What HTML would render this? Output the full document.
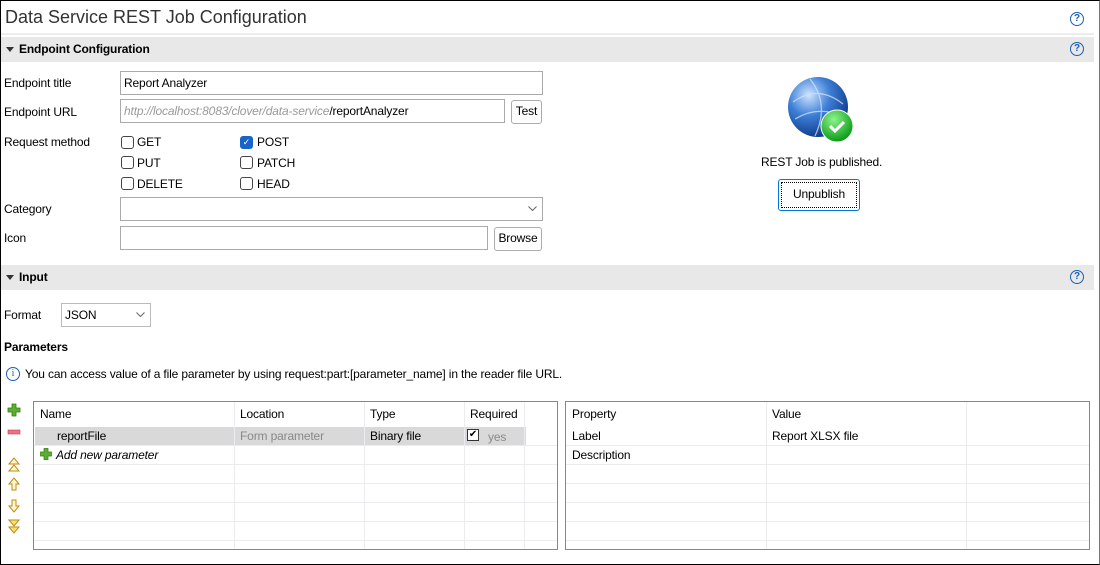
<!DOCTYPE html>
<html><head><meta charset="utf-8"><style>
*{box-sizing:border-box;margin:0;padding:0}
body{width:1100px;height:565px;overflow:hidden;background:#fff;font-family:"Liberation Sans",sans-serif;font-size:12px;letter-spacing:-0.15px;color:#000;position:relative}
.a{position:absolute;white-space:nowrap}
.frame{position:absolute;left:0;top:0;width:1100px;height:565px;border:1px solid #000;border-right-color:#777}
.band{position:absolute;left:1px;width:1093px;height:25px;background:#e8e8e8}
.band b{position:absolute;left:18px;top:5px;font-size:12px}
.tri{position:absolute;left:5px;top:10px;border-left:4px solid transparent;border-right:4px solid transparent;border-top:5px solid #333}
.help{position:absolute;width:14px;height:14px;border:1.5px solid #1a5fb4;border-radius:50%;color:#1a5fb4;font-size:10px;font-weight:bold;text-align:center;line-height:11px;letter-spacing:0}
.inp{position:absolute;border:1px solid #aaa;background:#fff;height:24px;padding:4px 3px}
.btn{position:absolute;border:1px solid #adadad;border-radius:3px;background:#fdfdfd;height:24px;text-align:center;line-height:21px}
.cb{position:absolute;width:13px;height:13px;border:1px solid #444;border-radius:3px;background:#fff}
.tbl{position:absolute;border:1px solid #828790;background:#fff;overflow:hidden}
.hl{position:absolute;height:1px;background:#ececf0}
.vl{position:absolute;width:1px;background:#ececf0}
.chev{position:absolute;right:5px;top:8px}
</style></head><body>
<div class="a" style="left:5px;top:7px;font-size:18px;color:#333;letter-spacing:0">Data Service REST Job Configuration</div>
<div class="help" style="left:1070px;top:12px">?</div>
<div class="a" style="left:1px;top:33px;width:1093px;height:2px;background:#ededed"></div>

<div class="band" style="top:37px"><div class="tri"></div><b>Endpoint Configuration</b></div>
<div class="help" style="left:1070px;top:42px">?</div>

<div class="a" style="left:4px;top:76px">Endpoint title</div>
<div class="inp" style="left:120px;top:71px;width:423px">Report Analyzer</div>
<div class="a" style="left:4px;top:105px">Endpoint URL</div>
<div class="inp" style="left:120px;top:99px;width:385px"><i style="color:#999">http://localhost:8083/clover/data-service</i>/reportAnalyzer</div>
<div class="btn" style="left:511px;top:100px;width:31px">Test</div>
<div class="a" style="left:4px;top:135px">Request method</div>
<div class="cb" style="left:121px;top:136px"></div><div class="a" style="left:137px;top:135px">GET</div>
<div class="cb" style="left:240px;top:136px;background:#1a63c8;border-color:#1a63c8;color:#fff;font-size:9px;line-height:11px;text-align:center">✓</div><div class="a" style="left:257px;top:135px">POST</div>
<div class="cb" style="left:121px;top:156px"></div><div class="a" style="left:137px;top:156px">PUT</div>
<div class="cb" style="left:240px;top:156px"></div><div class="a" style="left:257px;top:156px">PATCH</div>
<div class="cb" style="left:121px;top:177px"></div><div class="a" style="left:137px;top:177px">DELETE</div>
<div class="cb" style="left:240px;top:177px"></div><div class="a" style="left:257px;top:177px">HEAD</div>
<div class="a" style="left:4px;top:202px">Category</div>
<div class="inp" style="left:120px;top:197px;width:423px"><svg class="chev" width="9" height="6"><path d="M0.5 0.5 L4.5 4.5 L8.5 0.5" stroke="#666" fill="none"/></svg></div>
<div class="a" style="left:4px;top:231px">Icon</div>
<div class="inp" style="left:120px;top:226px;width:368px"></div>
<div class="btn" style="left:494px;top:227px;width:48px">Browse</div>

<svg class="a" style="left:785px;top:74px" width="72" height="70" viewBox="0 0 72 70">
<defs><radialGradient id="g" cx="35%" cy="30%" r="70%"><stop offset="0" stop-color="#cfe4ff"/><stop offset=".5" stop-color="#3d7fd6"/><stop offset="1" stop-color="#123f8f"/></radialGradient>
<radialGradient id="gg" cx="40%" cy="30%" r="70%"><stop offset="0" stop-color="#8cf58c"/><stop offset="1" stop-color="#0a9a16"/></radialGradient></defs>
<circle cx="33" cy="33" r="30" fill="url(#g)"/>
<path d="M8 28 Q33 10 58 30 M10 45 Q35 30 60 44 M25 5 Q45 30 30 62" stroke="#cfe0ff" stroke-width="1.2" fill="none" opacity=".8"/>
<circle cx="52" cy="52" r="16" fill="url(#gg)" stroke="#fff" stroke-width="1"/>
<path d="M45 52 l5 5 l9 -9" stroke="#fff" stroke-width="3" fill="none"/>
</svg>
<div class="a" style="left:761px;top:155px">REST Job is published.</div>
<div class="btn" style="left:778px;top:179px;width:82px;height:32px;line-height:28px;border-color:#0078d7;outline:1px dotted #000;outline-offset:-4px">Unpublish</div>

<div class="band" style="top:265px"><div class="tri"></div><b>Input</b></div>
<div class="help" style="left:1070px;top:270px">?</div>
<div class="a" style="left:4px;top:308px">Format</div>
<div class="inp" style="left:61px;top:303px;width:90px;border-color:#bbb">JSON<svg class="chev" width="9" height="6"><path d="M0.5 0.5 L4.5 4.5 L8.5 0.5" stroke="#666" fill="none"/></svg></div>
<div class="a" style="left:4px;top:340px;font-weight:bold">Parameters</div>
<div class="help" style="left:6px;top:367px;font-weight:normal;font-family:'Liberation Serif'">i</div>
<div class="a" style="left:25px;top:367px">You can access value of a file parameter by using request:part:[parameter_name] in the reader file URL.</div>

<svg class="a" style="left:7px;top:403px" width="14" height="140" viewBox="0 0 14 140">
<path d="M5 1h4v4h4v4h-4v4h-4v-4h-4v-4h4z" fill="#5cb030" stroke="#2e7a12" stroke-width=".8"/>
<rect x="1" y="27" width="12" height="4" fill="#f07080" stroke="#c04050" stroke-width=".6"/>
<path d="M2 61 L7 55 L12 61 Z M2 68 L7 62 L12 68 Z" fill="#fff6d0" stroke="#c08a10"/>
<path d="M7 75 L12 81 L9 81 L9 87 L5 87 L5 81 L2 81 Z" fill="#fff6d0" stroke="#c08a10"/>
<path d="M7 109 L12 103 L9 103 L9 97 L5 97 L5 103 L2 103 Z" fill="#fff6d0" stroke="#c08a10"/>
<path d="M2 117 L7 123 L12 117 Z M2 124 L7 130 L12 124 Z" fill="#ffe070" stroke="#c08a10"/>
</svg>

<div class="tbl" style="left:33px;top:401px;width:525px;height:149px">
<div class="a" style="left:1px;top:25px;width:491px;height:19px;background:#d9d9d9"></div>
<div class="vl" style="left:200px;top:0;height:149px"></div>
<div class="vl" style="left:330px;top:0;height:149px"></div>
<div class="vl" style="left:430px;top:0;height:149px"></div>
<div class="vl" style="left:490px;top:0;height:149px"></div>
<div class="hl" style="left:0;top:43px;width:525px"></div>
<div class="hl" style="left:0;top:62px;width:525px"></div>
<div class="hl" style="left:0;top:81px;width:525px"></div>
<div class="hl" style="left:0;top:100px;width:525px"></div>
<div class="hl" style="left:0;top:119px;width:525px"></div>
<div class="hl" style="left:0;top:138px;width:525px"></div>
<div class="a" style="left:6px;top:5px">Name</div><div class="a" style="left:206px;top:5px">Location</div><div class="a" style="left:336px;top:5px">Type</div><div class="a" style="left:436px;top:5px">Required</div>
<div class="a" style="left:23px;top:27px">reportFile</div><div class="a" style="left:206px;top:27px;color:#888">Form parameter</div><div class="a" style="left:336px;top:27px">Binary file</div>
<div class="a" style="left:433px;top:27px;width:12px;height:12px;border:1px solid #333;background:#fff;font-size:10px;line-height:10px;text-align:center">✔</div><div class="a" style="left:454px;top:28px;color:#888">yes</div>
<svg class="a" style="left:6px;top:46px" width="12" height="12"><path d="M4 0.5h4v3.5h3.5v4h-3.5v3.5h-4v-3.5h-3.5v-4h3.5z" fill="#5cb030" stroke="#2e7a12" stroke-width=".7"/></svg>
<div class="a" style="left:22px;top:46px;font-style:italic">Add new parameter</div>
</div>

<div class="tbl" style="left:565px;top:401px;width:525px;height:149px">
<div class="vl" style="left:200px;top:0;height:149px"></div>
<div class="vl" style="left:400px;top:0;height:149px"></div>
<div class="hl" style="left:0;top:43px;width:525px"></div>
<div class="hl" style="left:0;top:62px;width:525px"></div>
<div class="hl" style="left:0;top:81px;width:525px"></div>
<div class="hl" style="left:0;top:100px;width:525px"></div>
<div class="hl" style="left:0;top:119px;width:525px"></div>
<div class="hl" style="left:0;top:138px;width:525px"></div>
<div class="a" style="left:6px;top:5px">Property</div><div class="a" style="left:206px;top:5px">Value</div>
<div class="a" style="left:6px;top:27px">Label</div><div class="a" style="left:206px;top:27px">Report XLSX file</div>
<div class="a" style="left:6px;top:46px">Description</div>
</div>
<div class="frame"></div>
</body></html>
